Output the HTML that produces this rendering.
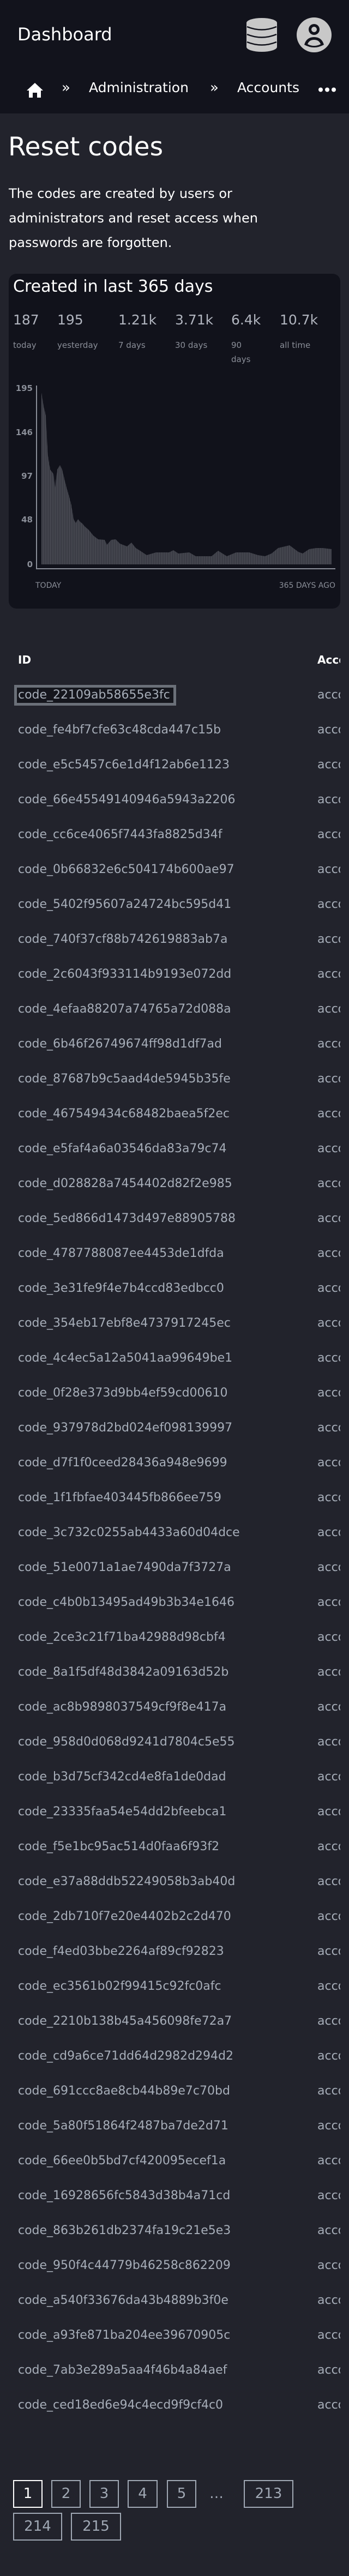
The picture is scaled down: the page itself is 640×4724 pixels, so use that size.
<!DOCTYPE html>
<html><head><meta charset="utf-8"><style>
*{margin:0;padding:0;box-sizing:border-box}
body{width:640px;height:4724px;background:#22232c;font-family:"DejaVu Sans","Liberation Sans",sans-serif;position:relative;overflow:hidden;color:#fff}
.a{position:absolute;white-space:nowrap}
.hdr{position:absolute;left:0;top:0;width:640px;height:208px;background:#12131c}
.st{color:#b0b4be;font-size:25px;line-height:30px}
.lb{color:#8a8e98;font-size:15px;line-height:26px;white-space:normal}
.yl{color:#8a8e98;font-size:15px;font-weight:bold;text-align:right;width:40px;left:20px;line-height:20px}
.row{position:absolute;left:33px;height:30px;font-size:22px;color:#a6adb8;line-height:30px;white-space:nowrap}
.acc{position:absolute;left:582px;width:42px;overflow:hidden;font-size:22px;color:#a6adb8;line-height:30px;height:30px}
.pg{position:absolute;border:2px solid #a0a8b4;color:#a0a8b4;font-size:26px;text-align:center;line-height:47px;height:51px}
</style></head><body>
<div class="hdr"></div>
<div class="a" style="left:32px;top:44px;font-size:32px;line-height:38px;color:#fff">Dashboard</div>
<svg class="a" style="left:452px;top:32px" width="56" height="64" viewBox="0 0 56 64">
<ellipse cx="28" cy="10" rx="28" ry="9" fill="#c8c8c8"/>
<rect x="0" y="10" width="56" height="44" fill="#c8c8c8"/>
<ellipse cx="28" cy="54" rx="28" ry="9" fill="#c8c8c8"/>
<path d="M1 17 Q28 28 55 17 M1 31 Q28 42 55 31 M1 45 Q28 56 55 45" stroke="#12131c" stroke-width="2.5" fill="none"/>
</svg>
<svg class="a" style="left:544px;top:32px" width="64" height="64" viewBox="0 0 64 64">
<ellipse cx="32" cy="32" rx="32" ry="32" fill="#c8c8c8"/>
<circle cx="32" cy="22" r="10" fill="#12131c"/><circle cx="32" cy="22" r="5" fill="#c8c8c8"/>
<path d="M14 50 Q18 36 32 36 Q46 36 50 50 Q32 60 14 50Z" fill="#12131c"/>
<path d="M20 49 Q23 41 32 41 Q41 41 44 49 Q32 55 20 49Z" fill="#c8c8c8"/>
</svg>
<svg class="a" style="left:48px;top:150px" width="32" height="30" viewBox="0 0 32 30">
<path d="M16 2 L31 16 L27 16 L27 29 L20 29 L20 20 L12 20 L12 29 L5 29 L5 16 L1 16Z" fill="#fff"/>
</svg>
<div class="a" style="left:113px;top:146px;font-size:26px;color:#fff">»</div>
<div class="a" style="left:163px;top:146px;font-size:25px;color:#fff">Administration</div>
<div class="a" style="left:385px;top:146px;font-size:26px;color:#fff">»</div>
<div class="a" style="left:435px;top:146px;font-size:25px;color:#fff">Accounts</div>
<svg class="a" style="left:584px;top:160px" width="32" height="9"><circle cx="4" cy="4.5" r="4" fill="#fff"/><circle cx="16" cy="4.5" r="4" fill="#fff"/><circle cx="28" cy="4.5" r="4" fill="#fff"/></svg>

<div class="a" style="left:15px;top:240px;font-size:47px;line-height:60px;color:#fff">Reset codes</div>
<div class="a" style="left:16px;top:333px;font-size:24px;line-height:45px;color:#fff;white-space:normal;width:520px">The codes are created by users or administrators and reset access when passwords are forgotten.</div>

<div class="a" style="left:16px;top:502px;width:608px;height:614px;background:#11121b;border-radius:14px"></div>
<div class="a" style="left:24px;top:507px;font-size:30px;line-height:38px;color:#fff">Created in last 365 days</div>
<div class="a st" style="left:24px;top:572px">187</div>
<div class="a st" style="left:105px;top:572px">195</div>
<div class="a st" style="left:217px;top:572px">1.21k</div>
<div class="a st" style="left:321px;top:572px">3.71k</div>
<div class="a st" style="left:424px;top:572px">6.4k</div>
<div class="a st" style="left:513px;top:572px">10.7k</div>
<div class="a lb" style="left:24px;top:620px">today</div>
<div class="a lb" style="left:105px;top:620px">yesterday</div>
<div class="a lb" style="left:217px;top:620px">7 days</div>
<div class="a lb" style="left:321px;top:620px">30 days</div>
<div class="a lb" style="left:424px;top:620px;width:40px">90 days</div>
<div class="a lb" style="left:513px;top:620px">all time</div>

<div class="a yl" style="top:702px">195</div>
<div class="a yl" style="top:783px">146</div>
<div class="a yl" style="top:863px">97</div>
<div class="a yl" style="top:943px">48</div>
<div class="a yl" style="top:1025px">0</div>
<svg class="a" style="left:0;top:0" width="640" height="1060">
<defs><pattern id="p" width="1.46" height="10" patternUnits="userSpaceOnUse"><rect width="1.0" height="10" fill="#54565e"/></pattern></defs>
<polygon fill="url(#p)" points="76,1035 76,720 80,745 84,762 86,803 88,836 92,861 98,869 101,894 105,861 110,853 114,861 118,878 122,894 127,911 131,927 135,952 139,959 143,952 147,957 151,960 155,965 163,972 171,982 180,989 192,990 196,999 204,990 212,989 220,997 233,1002 241,995 249,1005 257,1010 269,1018 286,1013 310,1013 318,1009 327,1015 347,1013 359,1020 388,1020 400,1010 416,1020 433,1013 457,1013 473,1018 486,1020 498,1015 510,1005 531,1000 547,1012 555,1015 567,1007 580,1005 592,1005 608,1007 608,1035"/>
<path d="M67 707 L67 1043 L615 1043" stroke="#8a8e98" stroke-width="2" fill="none"/>
</svg>
<div class="a" style="left:65px;top:1065px;font-size:14px;line-height:18px;color:#8a8e98">TODAY</div>
<div class="a" style="right:25px;top:1065px;font-size:14px;line-height:18px;color:#8a8e98">365 DAYS AGO</div>

<div class="a" style="left:33px;top:1198px;font-size:20px;font-weight:bold;color:#fff">ID</div>
<div class="a" style="left:582px;top:1198px;width:42px;overflow:hidden;font-size:20px;font-weight:bold;color:#fff">Account</div>
<div class="a" style="left:26px;top:1256px;width:297px;height:38px;border:5px solid #6b7079;background:#15161d"></div>

<div class="row" style="top:1260px">code_22109ab58655e3fc</div><div class="acc" style="top:1260px">account</div>
<div class="row" style="top:1324px">code_fe4bf7cfe63c48cda447c15b</div><div class="acc" style="top:1324px">account</div>
<div class="row" style="top:1388px">code_e5c5457c6e1d4f12ab6e1123</div><div class="acc" style="top:1388px">account</div>
<div class="row" style="top:1452px">code_66e45549140946a5943a2206</div><div class="acc" style="top:1452px">account</div>
<div class="row" style="top:1516px">code_cc6ce4065f7443fa8825d34f</div><div class="acc" style="top:1516px">account</div>
<div class="row" style="top:1580px">code_0b66832e6c504174b600ae97</div><div class="acc" style="top:1580px">account</div>
<div class="row" style="top:1644px">code_5402f95607a24724bc595d41</div><div class="acc" style="top:1644px">account</div>
<div class="row" style="top:1708px">code_740f37cf88b742619883ab7a</div><div class="acc" style="top:1708px">account</div>
<div class="row" style="top:1772px">code_2c6043f933114b9193e072dd</div><div class="acc" style="top:1772px">account</div>
<div class="row" style="top:1836px">code_4efaa88207a74765a72d088a</div><div class="acc" style="top:1836px">account</div>
<div class="row" style="top:1900px">code_6b46f26749674ff98d1df7ad</div><div class="acc" style="top:1900px">account</div>
<div class="row" style="top:1964px">code_87687b9c5aad4de5945b35fe</div><div class="acc" style="top:1964px">account</div>
<div class="row" style="top:2028px">code_467549434c68482baea5f2ec</div><div class="acc" style="top:2028px">account</div>
<div class="row" style="top:2092px">code_e5faf4a6a03546da83a79c74</div><div class="acc" style="top:2092px">account</div>
<div class="row" style="top:2156px">code_d028828a7454402d82f2e985</div><div class="acc" style="top:2156px">account</div>
<div class="row" style="top:2220px">code_5ed866d1473d497e88905788</div><div class="acc" style="top:2220px">account</div>
<div class="row" style="top:2284px">code_4787788087ee4453de1dfda</div><div class="acc" style="top:2284px">account</div>
<div class="row" style="top:2348px">code_3e31fe9f4e7b4ccd83edbcc0</div><div class="acc" style="top:2348px">account</div>
<div class="row" style="top:2412px">code_354eb17ebf8e4737917245ec</div><div class="acc" style="top:2412px">account</div>
<div class="row" style="top:2476px">code_4c4ec5a12a5041aa99649be1</div><div class="acc" style="top:2476px">account</div>
<div class="row" style="top:2540px">code_0f28e373d9bb4ef59cd00610</div><div class="acc" style="top:2540px">account</div>
<div class="row" style="top:2604px">code_937978d2bd024ef098139997</div><div class="acc" style="top:2604px">account</div>
<div class="row" style="top:2668px">code_d7f1f0ceed28436a948e9699</div><div class="acc" style="top:2668px">account</div>
<div class="row" style="top:2732px">code_1f1fbfae403445fb866ee759</div><div class="acc" style="top:2732px">account</div>
<div class="row" style="top:2796px">code_3c732c0255ab4433a60d04dce</div><div class="acc" style="top:2796px">account</div>
<div class="row" style="top:2860px">code_51e0071a1ae7490da7f3727a</div><div class="acc" style="top:2860px">account</div>
<div class="row" style="top:2924px">code_c4b0b13495ad49b3b34e1646</div><div class="acc" style="top:2924px">account</div>
<div class="row" style="top:2988px">code_2ce3c21f71ba42988d98cbf4</div><div class="acc" style="top:2988px">account</div>
<div class="row" style="top:3052px">code_8a1f5df48d3842a09163d52b</div><div class="acc" style="top:3052px">account</div>
<div class="row" style="top:3116px">code_ac8b9898037549cf9f8e417a</div><div class="acc" style="top:3116px">account</div>
<div class="row" style="top:3180px">code_958d0d068d9241d7804c5e55</div><div class="acc" style="top:3180px">account</div>
<div class="row" style="top:3244px">code_b3d75cf342cd4e8fa1de0dad</div><div class="acc" style="top:3244px">account</div>
<div class="row" style="top:3308px">code_23335faa54e54dd2bfeebca1</div><div class="acc" style="top:3308px">account</div>
<div class="row" style="top:3372px">code_f5e1bc95ac514d0faa6f93f2</div><div class="acc" style="top:3372px">account</div>
<div class="row" style="top:3436px">code_e37a88ddb52249058b3ab40d</div><div class="acc" style="top:3436px">account</div>
<div class="row" style="top:3500px">code_2db710f7e20e4402b2c2d470</div><div class="acc" style="top:3500px">account</div>
<div class="row" style="top:3564px">code_f4ed03bbe2264af89cf92823</div><div class="acc" style="top:3564px">account</div>
<div class="row" style="top:3628px">code_ec3561b02f99415c92fc0afc</div><div class="acc" style="top:3628px">account</div>
<div class="row" style="top:3692px">code_2210b138b45a456098fe72a7</div><div class="acc" style="top:3692px">account</div>
<div class="row" style="top:3756px">code_cd9a6ce71dd64d2982d294d2</div><div class="acc" style="top:3756px">account</div>
<div class="row" style="top:3820px">code_691ccc8ae8cb44b89e7c70bd</div><div class="acc" style="top:3820px">account</div>
<div class="row" style="top:3884px">code_5a80f51864f2487ba7de2d71</div><div class="acc" style="top:3884px">account</div>
<div class="row" style="top:3948px">code_66ee0b5bd7cf420095ecef1a</div><div class="acc" style="top:3948px">account</div>
<div class="row" style="top:4012px">code_16928656fc5843d38b4a71cd</div><div class="acc" style="top:4012px">account</div>
<div class="row" style="top:4076px">code_863b261db2374fa19c21e5e3</div><div class="acc" style="top:4076px">account</div>
<div class="row" style="top:4140px">code_950f4c44779b46258c862209</div><div class="acc" style="top:4140px">account</div>
<div class="row" style="top:4204px">code_a540f33676da43b4889b3f0e</div><div class="acc" style="top:4204px">account</div>
<div class="row" style="top:4268px">code_a93fe871ba204ee39670905c</div><div class="acc" style="top:4268px">account</div>
<div class="row" style="top:4332px">code_7ab3e289a5aa4f46b4a84aef</div><div class="acc" style="top:4332px">account</div>
<div class="row" style="top:4396px">code_ced18ed6e94c4ecd9f9cf4c0</div><div class="acc" style="top:4396px">account</div>

<div class="pg" style="left:24px;top:4548px;width:54px;border-color:#fff;color:#fff">1</div>
<div class="pg" style="left:94px;top:4548px;width:54px">2</div>
<div class="pg" style="left:164px;top:4548px;width:54px">3</div>
<div class="pg" style="left:234px;top:4548px;width:55px">4</div>
<div class="pg" style="left:306px;top:4548px;width:54px">5</div>
<div class="a" style="left:384px;top:4558px;font-size:26px;color:#a0a8b4">…</div>
<div class="pg" style="left:447px;top:4548px;width:91px">213</div>
<div class="pg" style="left:24px;top:4608px;width:90px">214</div>
<div class="pg" style="left:130px;top:4608px;width:92px">215</div>
</body></html>
